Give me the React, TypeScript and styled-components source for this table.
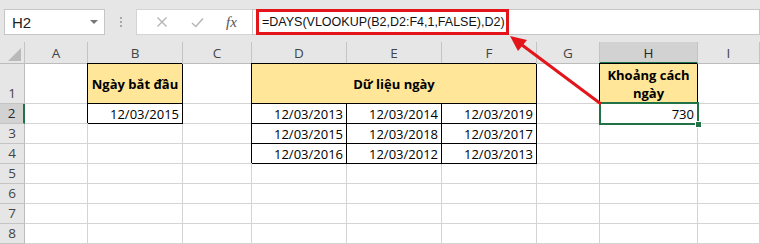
import React from "react";
import styled, { createGlobalStyle, css } from "styled-components";

const GlobalStyle = createGlobalStyle`
  html, body { margin: 0; padding: 0; background: #fff; }
  body { font-family: "Open Sans", "Noto Sans", sans-serif; }
  * { box-sizing: border-box; }
`;

const COLS = [25, 63, 95, 69, 95, 95, 95, 63, 98, 62];
const LETTERS = ["A", "B", "C", "D", "E", "F", "G", "H", "I"];
const GRID = "#d4d4d4";
const GREEN = "#217346";
const YELLOW = "#ffe699";

const Window = styled.div`
  position: relative;
  width: 760px;
  height: 244px;
  overflow: hidden;
  background: #e6e6e6;
`;

const FormulaBar = styled.div`
  display: flex;
  align-items: flex-start;
  height: 42px;
  padding: 9px 0 0 4px;
`;

const NameBox = styled.div`
  width: 101px;
  height: 26px;
  background: #fff;
  border: 1px solid #c6c6c6;
  display: flex;
  align-items: center;
  justify-content: space-between;
  padding: 0 6px 0 7px;
  font-family: "Liberation Sans", Arial, sans-serif;
  font-size: 15px;
  color: #222;
`;

const Caret = styled.span`
  width: 0;
  height: 0;
  border-left: 4px solid transparent;
  border-right: 4px solid transparent;
  border-top: 4px solid #777;
`;

const Grip = styled.div`
  width: 31px;
  height: 26px;
  display: flex;
  flex-direction: column;
  align-items: center;
  justify-content: center;
  gap: 2px;
  & > i {
    width: 2px;
    height: 2px;
    background: #a8a8a8;
  }
`;

const FxBox = styled.div`
  width: 116px;
  height: 26px;
  background: #fff;
  border: 1px solid #d4d4d4;
  border-right: none;
  display: flex;
  align-items: center;
  justify-content: space-around;
  padding: 0 4px 0 8px;
  color: #b0b0b0;
`;

const FxLabel = styled.span`
  font-family: "Liberation Serif", "Times New Roman", serif;
  font-style: italic;
  font-size: 15px;
  color: #555;
`;

const FormulaInput = styled.div`
  flex: 1;
  height: 26px;
  background: #fff;
  border: 1px solid #c6c6c6;
  display: flex;
  align-items: stretch;
  padding-left: 3px;
`;

const FormulaText = styled.span`
  display: inline-flex;
  align-items: center;
  width: 253px;
  margin: -1px 0;
  border: 3px solid #e3151a;
  padding-left: 3px;
  font-family: "Liberation Sans", Arial, sans-serif;
  font-size: 12.5px;
  color: #111;
  white-space: nowrap;
`;

const Sheet = styled.div`
  display: grid;
  grid-template-columns: ${COLS.map((c) => `${c}px`).join(" ")};
  grid-template-rows: 22px 40px repeat(7, 20px);
  background: #fff;
`;

const ColHead = styled.div<{ $active?: boolean }>`
  display: flex;
  align-items: center;
  justify-content: center;
  background: ${(p) => (p.$active ? "#d2d2d2" : "#e6e6e6")};
  border-right: 1px solid #c4c4c4;
  border-bottom: ${(p) => (p.$active ? `2px solid ${GREEN}` : "1px solid #bcbcbc")};
  font-size: 13.5px;
  color: ${(p) => (p.$active ? "#262626" : "#444")};
  padding-top: ${(p) => (p.$active ? "1px" : "0")};
`;

const Corner = styled.div`
  background: #e6e6e6;
  border-right: 1px solid #c4c4c4;
  border-bottom: 1px solid #bcbcbc;
  display: flex;
  align-items: flex-end;
  justify-content: flex-end;
  padding: 0 3px 2px 0;
  & > span {
    width: 0;
    height: 0;
    border-left: 13px solid transparent;
    border-bottom: 13px solid #b9b9b9;
  }
`;

const RowHead = styled.div<{ $active?: boolean }>`
  display: flex;
  align-items: flex-end;
  justify-content: center;
  padding-bottom: 1px;
  background: ${(p) => (p.$active ? "#d2d2d2" : "#e6e6e6")};
  border-right: ${(p) => (p.$active ? `2px solid ${GREEN}` : "1px solid #bcbcbc")};
  border-bottom: 1px solid #c4c4c4;
  font-size: 13.5px;
  line-height: 18px;
  color: ${(p) => (p.$active ? "#262626" : "#444")};
`;

const Cell = styled.div<{
  $boxed?: boolean;
  $head?: boolean;
  $span?: number;
  $align?: "left" | "center" | "right";
}>`
  position: relative;
  display: flex;
  align-items: center;
  justify-content: ${(p) =>
    p.$align === "right" ? "flex-end" : p.$align === "center" ? "center" : "flex-start"};
  text-align: center;
  padding: 0 3px;
  font-size: 13px;
  line-height: 18px;
  color: #000;
  border-right: 1px solid ${GRID};
  border-bottom: 1px solid ${GRID};
  ${(p) => p.$span && css`grid-column: span ${p.$span};`}
  ${(p) =>
    p.$boxed &&
    css`
      z-index: 1;
      border-right-color: #000;
      border-bottom-color: #000;
      box-shadow: -1px -1px 0 0 #000;
    `}
  ${(p) =>
    p.$head &&
    css`
      background: ${YELLOW};
      font-weight: 700;
    `}
`;

const Selection = styled.div`
  position: absolute;
  top: -2px;
  left: -1px;
  right: -2px;
  bottom: -2px;
  border: 2px solid ${GREEN};
  z-index: 2;
  pointer-events: none;
`;

const FillHandle = styled.span`
  position: absolute;
  right: -5px;
  bottom: -5px;
  width: 7px;
  height: 7px;
  background: ${GREEN};
  border: 1px solid #fff;
`;

const Overlay = styled.svg`
  position: absolute;
  left: 0;
  top: 0;
  z-index: 5;
  pointer-events: none;
`;

type CellSpec = {
  text?: string;
  boxed?: boolean;
  head?: boolean;
  span?: number;
  align?: "left" | "center" | "right";
  selected?: boolean;
};

const row = (...cells: CellSpec[]) => cells;
const E: CellSpec = {};
const date = (t: string): CellSpec => ({ text: t, boxed: true, align: "right" });

const ROWS: CellSpec[][] = [
  row(
    E,
    { text: "Ngày bắt đầu", boxed: true, head: true, align: "center" },
    E,
    { text: "Dữ liệu ngày", boxed: true, head: true, span: 3, align: "center" },
    E,
    { text: "Khoảng cách ngày", boxed: true, head: true, align: "center" },
    E
  ),
  row(
    E,
    date("12/03/2015"),
    E,
    date("12/03/2013"),
    date("12/03/2014"),
    date("12/03/2019"),
    E,
    { text: "730", align: "right", selected: true },
    E
  ),
  row(E, E, E, date("12/03/2015"), date("12/03/2018"), date("12/03/2017"), E, E, E),
  row(E, E, E, date("12/03/2016"), date("12/03/2012"), date("12/03/2013"), E, E, E),
  row(E, E, E, E, E, E, E, E, E),
  row(E, E, E, E, E, E, E, E, E),
  row(E, E, E, E, E, E, E, E, E),
  row(E, E, E, E, E, E, E, E, E),
];

function CrossIcon() {
  return (
    <svg width="12" height="12" viewBox="0 0 12 12">
      <path d="M1.5 1.5 L10.5 10.5 M10.5 1.5 L1.5 10.5" stroke="#b5b5b5" strokeWidth="1.4" />
    </svg>
  );
}

function CheckIcon() {
  return (
    <svg width="13" height="11" viewBox="0 0 13 11">
      <path d="M1 6 L4.8 9.5 L12 1.5" stroke="#b5b5b5" strokeWidth="1.5" fill="none" />
    </svg>
  );
}

export default function App() {
  return (
    <>
      <GlobalStyle />
      <Window>
        <FormulaBar>
          <NameBox>
            H2
            <Caret />
          </NameBox>
          <Grip>
            <i />
            <i />
            <i />
          </Grip>
          <FxBox>
            <CrossIcon />
            <CheckIcon />
            <FxLabel>fx</FxLabel>
          </FxBox>
          <FormulaInput>
            <FormulaText>=DAYS(VLOOKUP(B2,D2:F4,1,FALSE),D2)</FormulaText>
          </FormulaInput>
        </FormulaBar>
        <Sheet>
          <Corner>
            <span />
          </Corner>
          {LETTERS.map((l) => (
            <ColHead key={l} $active={l === "H"}>
              {l}
            </ColHead>
          ))}
          {ROWS.map((cells, r) => (
            <React.Fragment key={r}>
              <RowHead $active={r === 1}>{r + 1}</RowHead>
              {cells.map((c, i) => (
                <Cell
                  key={i}
                  $boxed={c.boxed}
                  $head={c.head}
                  $span={c.span}
                  $align={c.align}
                >
                  {c.text}
                  {c.selected && (
                    <Selection>
                      <FillHandle />
                    </Selection>
                  )}
                </Cell>
              ))}
            </React.Fragment>
          ))}
        </Sheet>
        <Overlay width="760" height="244" viewBox="0 0 760 244">
          <line x1="601" y1="104" x2="518" y2="42" stroke="#e3151a" strokeWidth="3" />
          <polygon points="510,36 527,40 518,51" fill="#e3151a" />
        </Overlay>
      </Window>
    </>
  );
}
